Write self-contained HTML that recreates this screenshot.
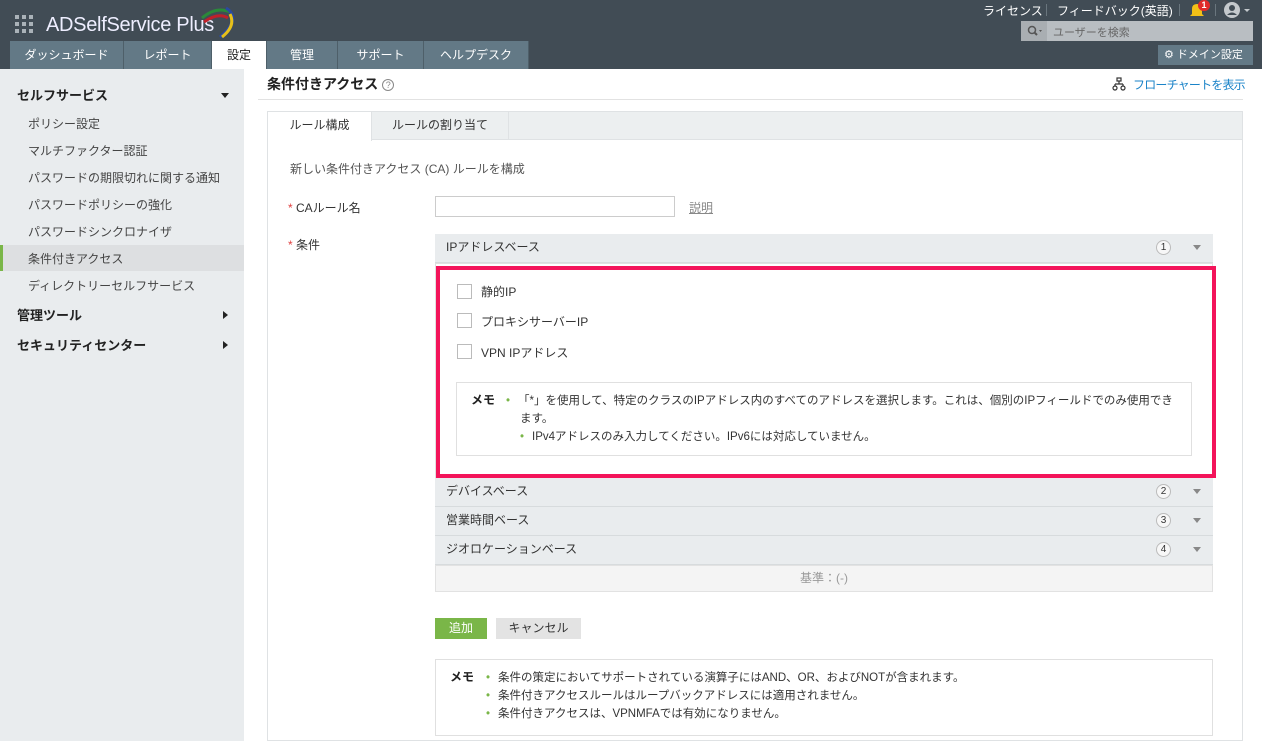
<!DOCTYPE html>
<html><head><meta charset="utf-8"><style>
*{box-sizing:border-box;margin:0;padding:0}
body{width:1262px;height:741px;overflow:hidden;position:relative;background:#fff;font-family:"Liberation Sans","Noto Sans CJK JP",sans-serif;font-size:12px;color:#333}
.a{position:absolute;white-space:nowrap}
#hdr{left:0;top:0;width:1262px;height:69px;background:#414c55}
.tab{position:absolute;top:41px;height:28px;background:#637986;color:#fff;font-size:12px;text-align:center;line-height:28px;border-right:1px solid #4e5f69}
#side{left:0;top:69px;width:244px;height:672px;background:#e9ecee}
.si{position:absolute;left:28px;color:#444;font-size:12px}
.sh{position:absolute;left:17px;font-weight:bold;font-size:13px;color:#222}
.row{position:absolute;left:435px;width:778px;height:29px;background:#e9ecee;border-bottom:1px solid #d7dbdd;padding-left:11px;line-height:26px;color:#333}
.num{position:absolute;right:42px;top:6px;width:15px;height:15px;border:1px solid #bbb;border-radius:50%;font-size:10px;line-height:13px;text-align:center;background:#f7f7f7}
.car{position:absolute;right:12px;top:11px;border-left:4px solid transparent;border-right:4px solid transparent;border-top:5px solid #888}
.cb{position:absolute;left:457px;width:15px;height:15px;border:1px solid #bbb;background:#fff}
.dot{color:#7ab648;margin-right:8px}
</style></head><body>
<div class="a" id="hdr"></div>
<svg class="a" style="left:15px;top:15px" width="18" height="18"><g fill="#aab2b8"><rect x="0" y="0" width="4" height="4"/><rect x="7" y="0" width="4" height="4"/><rect x="14" y="0" width="4" height="4"/><rect x="0" y="7" width="4" height="4"/><rect x="7" y="7" width="4" height="4"/><rect x="14" y="7" width="4" height="4"/><rect x="0" y="14" width="4" height="4"/><rect x="7" y="14" width="4" height="4"/><rect x="14" y="14" width="4" height="4"/></g></svg>
<div class="a" style="left:46px;top:14px;color:#eef;font-size:20px;letter-spacing:-0.3px">ADSelfService Plus</div>
<svg class="a" style="left:196px;top:4px" width="46" height="34"><path d="M6 14 Q20 2 34 8" stroke="#2a8a3a" stroke-width="3" fill="none"/><path d="M8 18 Q22 8 32 14" stroke="#c0202a" stroke-width="3" fill="none"/><path d="M30 4 Q46 14 24 33" stroke="#2a4aa0" stroke-width="3" fill="none"/><path d="M34 10 Q40 22 26 33" stroke="#e6c01a" stroke-width="3" fill="none"/></svg>
<div class="tab" style="left:10px;width:114px">ダッシュボード</div>
<div class="tab" style="left:124px;width:88px">レポート</div>
<div class="tab" style="left:212px;width:55px;background:#fff;color:#222">設定</div>
<div class="tab" style="left:267px;width:71px">管理</div>
<div class="tab" style="left:338px;width:86px">サポート</div>
<div class="tab" style="left:424px;width:105px">ヘルプデスク</div>
<div class="a" style="left:983px;top:2px;color:#fff">ライセンス</div>
<div class="a" style="left:1046px;top:4px;width:1px;height:12px;background:#6a767e"></div>
<div class="a" style="left:1057px;top:2px;color:#fff">フィードバック(英語)</div>
<div class="a" style="left:1179px;top:4px;width:1px;height:12px;background:#6a767e"></div>
<svg class="a" style="left:1189px;top:2px" width="16" height="16"><path d="M3 12 L3 7 Q3 2 8 2 Q13 2 13 7 L13 12 L15 14 L1 14 Z" fill="#f3c117"/></svg>
<div class="a" style="left:1198px;top:0;width:12px;height:11px;border-radius:6px;background:#e02a2a;color:#fff;font-size:9px;font-weight:bold;text-align:center;line-height:11px">1</div>
<div class="a" style="left:1215px;top:4px;width:1px;height:12px;background:#6a767e"></div>
<svg class="a" style="left:1224px;top:1px" width="30" height="18"><circle cx="8" cy="9" r="8" fill="#c4c9cd"/><circle cx="8" cy="7" r="3" fill="#414c55"/><path d="M3 14 Q8 9 13 14" fill="#414c55"/><path d="M20 8 L26 8 L23 11 Z" fill="#c4c9cd"/></svg>
<div class="a" style="left:1021px;top:21px;width:232px;height:20px;background:#b9bec2"></div>
<div class="a" style="left:1021px;top:21px;width:26px;height:20px;background:#a9aeb2"></div>
<svg class="a" style="left:1027px;top:25px" width="16" height="12"><circle cx="5" cy="5" r="3.5" stroke="#555" stroke-width="1.5" fill="none"/><path d="M7.5 7.5 L10 10" stroke="#555" stroke-width="2"/><path d="M12 5 L15 5 L13.5 7 Z" fill="#555"/></svg>
<div class="a" style="left:1053px;top:24px;color:#666;font-size:11px">ユーザーを検索</div>
<div class="a" style="left:1158px;top:45px;width:95px;height:20px;background:#637986;color:#fff;font-size:11px;line-height:20px;padding-left:6px">⚙ ドメイン設定</div>

<div class="a" id="side"></div>
<div class="sh" style="top:85px">セルフサービス</div>
<div class="a" style="left:221px;top:93px;border-left:4px solid transparent;border-right:4px solid transparent;border-top:5px solid #222"></div>
<div class="si" style="top:115px">ポリシー設定</div>
<div class="si" style="top:142px">マルチファクター認証</div>
<div class="si" style="top:169px">パスワードの期限切れに関する通知</div>
<div class="si" style="top:196px">パスワードポリシーの強化</div>
<div class="si" style="top:223px">パスワードシンクロナイザ</div>
<div class="a" style="left:0;top:245px;width:244px;height:26px;background:#dddfe1;border-left:3px solid #7ab648"></div>
<div class="si" style="top:250px">条件付きアクセス</div>
<div class="si" style="top:277px">ディレクトリーセルフサービス</div>
<div class="sh" style="top:305px">管理ツール</div>
<div class="a" style="left:223px;top:311px;border-top:4px solid transparent;border-bottom:4px solid transparent;border-left:5px solid #222"></div>
<div class="sh" style="top:335px">セキュリティセンター</div>
<div class="a" style="left:223px;top:341px;border-top:4px solid transparent;border-bottom:4px solid transparent;border-left:5px solid #222"></div>

<div class="a" style="left:267px;top:74px;font-size:14px;font-weight:bold;color:#222">条件付きアクセス <span style="display:inline-block;width:12px;height:12px;border:1px solid #888;border-radius:50%;font-size:9px;line-height:10px;text-align:center;color:#888;font-weight:normal;vertical-align:middle">?</span></div>
<div class="a" style="left:258px;top:99px;width:985px;height:1px;background:#e2e2e2"></div>
<svg class="a" style="left:1112px;top:77px" width="14" height="14"><g fill="none" stroke="#333" stroke-width="1.2"><rect x="5" y="1" width="4" height="3"/><path d="M7 4 V7 M3 7 H11 M3 7 V9 M11 7 V9"/><circle cx="3" cy="11" r="2"/><circle cx="11" cy="11" r="2"/></g></svg>
<div class="a" style="left:1133px;top:76px;color:#1a83c8;letter-spacing:-0.8px">フローチャートを表示</div>

<div class="a" style="left:267px;top:111px;width:976px;height:630px;border:1px solid #dfe2e4"></div>
<div class="a" style="left:268px;top:112px;width:974px;height:28px;background:#eceff0;border-bottom:1px solid #dfe2e4"></div>
<div class="a" style="left:268px;top:112px;width:104px;height:29px;background:#fff;border-right:1px solid #dfe2e4;text-align:center;line-height:26px">ルール構成</div>
<div class="a" style="left:372px;top:112px;width:137px;height:28px;border-right:1px solid #dfe2e4;text-align:center;line-height:26px">ルールの割り当て</div>
<div class="a" style="left:290px;top:160px;color:#555">新しい条件付きアクセス (CA) ルールを構成</div>
<div class="a" style="left:288px;top:199px"><span style="color:#e04040">*</span> CAルール名</div>
<div class="a" style="left:435px;top:196px;width:240px;height:21px;border:1px solid #ccc"></div>
<div class="a" style="left:689px;top:199px;color:#888;text-decoration:underline">説明</div>
<div class="a" style="left:288px;top:236px"><span style="color:#e04040">*</span> 条件</div>
<div class="row" style="top:234px">IPアドレスベース<span class="num">1</span><span class="car"></span></div>
<div class="a" style="left:435px;top:263px;width:778px;height:215px;border:1px solid #e0e0e0"></div>
<div class="a" style="left:436px;top:266px;width:780px;height:212px;border:4px solid #f3145a"></div>
<div class="cb" style="top:284px"></div><div class="a" style="left:481px;top:283px">静的IP</div>
<div class="cb" style="top:313px"></div><div class="a" style="left:481px;top:313px">プロキシサーバーIP</div>
<div class="cb" style="top:344px"></div><div class="a" style="left:481px;top:344px">VPN IPアドレス</div>
<div class="a" style="left:456px;top:382px;width:736px;height:74px;border:1px solid #e0e0e0"></div>
<div class="a" style="left:471px;top:391px;font-weight:bold;color:#222">メモ</div>
<div class="a" style="left:506px;top:392px;font-size:11.5px;line-height:18px;white-space:normal;width:672px;padding-left:14px;text-indent:-14px"><span class="dot">•</span>「*」を使用して、特定のクラスのIPアドレス内のすべてのアドレスを選択します。これは、個別のIPフィールドでのみ使用できます。<br><span class="dot">•</span>IPv4アドレスのみ入力してください。IPv6には対応していません。</div>
<div class="row" style="top:478px">デバイスベース<span class="num">2</span><span class="car"></span></div>
<div class="row" style="top:507px">営業時間ベース<span class="num">3</span><span class="car"></span></div>
<div class="row" style="top:536px">ジオロケーションベース<span class="num">4</span><span class="car"></span></div>
<div class="a" style="left:435px;top:565px;width:778px;height:27px;background:#f4f4f4;border:1px solid #e2e2e2;text-align:center;line-height:24px;color:#999">基準：(-)</div>
<div class="a" style="left:435px;top:618px;width:52px;height:21px;background:#7ab648;color:#fff;text-align:center;line-height:20px">追加</div>
<div class="a" style="left:496px;top:618px;width:85px;height:21px;background:#e3e3e3;text-align:center;line-height:20px">キャンセル</div>
<div class="a" style="left:435px;top:659px;width:778px;height:77px;border:1px solid #e0e0e0"></div>
<div class="a" style="left:450px;top:668px;font-weight:bold;color:#222">メモ</div>
<div class="a" style="left:486px;top:669px;font-size:11.5px;line-height:18px"><span class="dot">•</span>条件の策定においてサポートされている演算子にはAND、OR、およびNOTが含まれます。<br><span class="dot">•</span>条件付きアクセスルールはループバックアドレスには適用されません。<br><span class="dot">•</span>条件付きアクセスは、VPNMFAでは有効になりません。</div>
</body></html>
